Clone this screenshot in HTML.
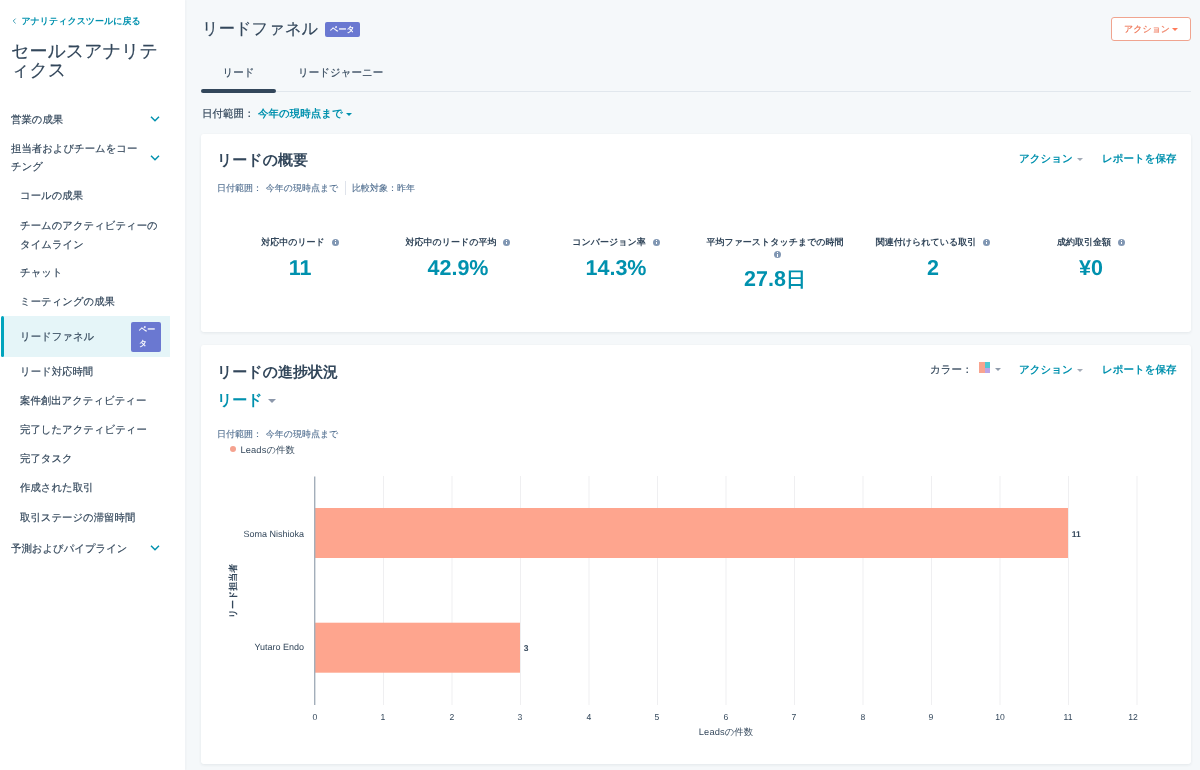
<!DOCTYPE html>
<html lang="ja">
<head>
<meta charset="utf-8">
<title>セールスアナリティクス</title>
<style>
*{box-sizing:border-box;margin:0;padding:0}
html,body{width:1200px;height:770px;overflow:hidden}
body{position:relative;background:#f5f8fa;font-family:"Liberation Sans",sans-serif;color:#33475b;font-size:10.5px;line-height:1;text-rendering:geometricPrecision;-webkit-text-stroke:.17px}
.a{position:absolute;white-space:nowrap}
.t{color:#0091ae}
.b{font-weight:bold}
.b,.kl,.kv,[style*="font-weight:bold"]{-webkit-text-stroke:0}
#w{position:absolute;left:0;top:0;width:1200px;height:770px;will-change:transform}
#side{position:absolute;left:0;top:0;width:185px;height:770px;background:#fff;box-shadow:1px 0 2px rgba(45,62,80,.04)}
.nav{position:absolute;left:11px;margin-top:2px;font-size:10.4px;line-height:18px;white-space:nowrap;color:#33475b}
.sub{left:20px}
.card{position:absolute;left:201px;width:990px;background:#fff;border-radius:3px;box-shadow:0 1px 3px rgba(45,62,80,.09)}
.kl{position:absolute;top:236px;width:160px;text-align:center;font-size:9px;font-weight:bold;line-height:12px;white-space:nowrap;color:#33475b}
.kv{position:absolute;top:255px;width:160px;text-align:center;font-size:21.5px;font-weight:bold;line-height:26px;white-space:nowrap;color:#0091ae}
.i{display:inline-block;width:7px;height:7px;border-radius:50%;background:#8197b3;margin-left:7px;vertical-align:-0.5px;position:relative}
.i:before{content:"";position:absolute;left:3px;top:3.1px;width:1px;height:2.6px;background:#fff}
.i:after{content:"";position:absolute;left:3px;top:1.2px;width:1px;height:.9px;background:#fff}
.sm{-webkit-text-stroke:.12px;font-size:9px;color:#516f90}
.cx{position:absolute;-webkit-text-stroke:0;font-size:9px;color:#33475b;white-space:nowrap;line-height:10px}
.tick{top:711.5px;width:30px;text-align:center;font-size:8.6px}
</style>
</head>
<body>
<div id="w">
<div id="side">
  <svg class="a" style="left:12.2px;top:17.4px" width="6" height="8" viewBox="0 0 6 8"><path d="M3.6 1.6 1.2 4 3.6 6.4" fill="none" stroke="#2a93ad" stroke-width="0.9"/></svg>
  <div class="a t b" style="left:21.4px;top:16px;font-size:9px;line-height:11px">アナリティクスツールに戻る</div>
  <div class="a" style="left:11px;top:42px;font-size:18px;line-height:19px;color:#33475b">セールスアナリテ<br>ィクス</div>

  <div class="nav" style="top:110px">営業の成果</div>
  <div class="nav" style="top:139px">担当者およびチームをコー<br>チング</div>
  <div class="nav sub" style="top:186px">コールの成果</div>
  <div class="nav sub" style="top:215px;line-height:19px">チームのアクティビティーの<br>タイムライン</div>
  <div class="nav sub" style="top:263px">チャット</div>
  <div class="nav sub" style="top:292px">ミーティングの成果</div>
  <div class="a" style="left:2px;top:316px;width:168px;height:41px;background:#e5f5f8"></div><div class="a" style="left:1px;top:316px;width:3px;height:41px;background:#00a4bd;border-radius:1.5px"></div>
  <div class="nav sub" style="top:327px">リードファネル</div>
  <div class="a" style="left:131px;top:321.5px;width:30px;height:30.5px;background:#6a78d1;border-radius:2px;color:#fff;font-size:8px;font-weight:bold;line-height:14px;padding:1px 0 0 8px">ベー<br>タ</div>
  <div class="nav sub" style="top:362px">リード対応時間</div>
  <div class="nav sub" style="top:391px">案件創出アクティビティー</div>
  <div class="nav sub" style="top:420px">完了したアクティビティー</div>
  <div class="nav sub" style="top:449px">完了タスク</div>
  <div class="nav sub" style="top:478px">作成された取引</div>
  <div class="nav sub" style="top:508px">取引ステージの滞留時間</div>
  <div class="nav" style="top:539px">予測およびパイプライン</div>

  <svg class="a" style="left:150px;top:115px" width="10" height="8" viewBox="0 0 10 8"><path d="M1 1.8 5 5.8 9 1.8" fill="none" stroke="#0091ae" stroke-width="1.5"/></svg>
  <svg class="a" style="left:150px;top:153.5px" width="10" height="8" viewBox="0 0 10 8"><path d="M1 1.8 5 5.8 9 1.8" fill="none" stroke="#0091ae" stroke-width="1.5"/></svg>
  <svg class="a" style="left:150px;top:544px" width="10" height="8" viewBox="0 0 10 8"><path d="M1 1.8 5 5.8 9 1.8" fill="none" stroke="#0091ae" stroke-width="1.5"/></svg>
</div>

<!-- header -->
<div class="a" style="left:202px;top:19.1px;font-size:16.3px;line-height:20px;color:#33475b">リードファネル</div>
<div class="a" style="left:325px;top:22px;width:35px;height:15px;background:#6a78d1;border-radius:2px;color:#fff;font-size:8px;font-weight:bold;line-height:15px;text-align:center">ベータ</div>
<div class="a" style="left:1111px;top:17px;width:80px;height:24px;background:#fff;border:1px solid #f0a48f;border-radius:3px;color:#ee7a5c;font-size:9px;line-height:22px;padding-left:12px">アクション<span style="display:inline-block;margin-left:2px;border:3px solid transparent;border-top:3.5px solid #ff7a59;border-bottom:0;vertical-align:1px"></span></div>

<!-- tabs -->
<div class="a" style="left:201px;top:91px;width:990px;height:1px;background:#e1e7ed"></div>
<div class="a" style="left:201.4px;top:89.4px;width:74.6px;height:4px;background:#33475b;border-radius:2px"></div>
<div class="a" style="left:201px;top:67px;width:75px;text-align:center;font-size:10.5px;line-height:12px">リード</div>
<div class="a" style="left:298px;top:67px;font-size:10.5px;line-height:12px">リードジャーニー</div>

<div class="a" style="left:202px;top:107.6px;font-size:10.5px;line-height:12px">日付範囲：</div>
<div class="a t b" style="left:258px;top:107.6px;font-size:10.5px;line-height:12px">今年の現時点まで<span style="display:inline-block;margin-left:3px;border:3px solid transparent;border-top:3.5px solid #0091ae;border-bottom:0;vertical-align:1px"></span></div>

<!-- card 1 -->
<div class="card" style="top:134px;height:198px"></div>
<div class="a" style="left:217px;top:152px;font-size:15px;font-weight:bold;line-height:18px;color:#33475b">リードの概要</div>
<div class="a t b" style="left:1019px;top:152.6px;font-size:10.5px;line-height:12px">アクション<span style="display:inline-block;margin-left:4px;border:3px solid transparent;border-top:3.5px solid #a3abb8;border-bottom:0;vertical-align:1px"></span></div>
<div class="a t b" style="left:1102px;top:152.6px;font-size:10.5px;line-height:12px">レポートを保存</div>
<div class="a sm" style="left:217px;top:183px;line-height:10px">日付範囲：</div><div class="a sm" style="left:265.7px;top:183px;line-height:10px">今年の現時点まで</div>
<div class="a" style="left:345px;top:181px;width:1px;height:14px;background:#dfe3eb"></div>
<div class="a sm" style="left:352px;top:183px;line-height:10px">比較対象：昨年</div>

<div class="kl" style="left:220px">対応中のリード<span class="i"></span></div>
<div class="kv" style="left:220px">11</div>
<div class="kl" style="left:378px">対応中のリードの平均<span class="i"></span></div>
<div class="kv" style="left:378px">42.9%</div>
<div class="kl" style="left:536px">コンバージョン率<span class="i"></span></div>
<div class="kv" style="left:536px">14.3%</div>
<div class="kl" style="left:695px">平均ファーストタッチまでの時間<br><span class="i" style="margin-left:5px;top:.8px"></span></div>
<div class="kv" style="left:695px;top:266px">27.8<span style="font-size:20px">日</span></div>
<div class="kl" style="left:853px">関連付けられている取引<span class="i"></span></div>
<div class="kv" style="left:853px">2</div>
<div class="kl" style="left:1011px">成約取引金額<span class="i"></span></div>
<div class="kv" style="left:1011px">¥0</div>

<!-- card 2 -->
<div class="card" style="top:345px;height:419px"></div>
<div class="a" style="left:217px;top:363.8px;font-size:15px;font-weight:bold;line-height:18px;color:#33475b">リードの進捗状況</div>
<div class="a t" style="left:217px;top:391.75px;font-size:15px;font-weight:bold;line-height:18px">リード<span style="display:inline-block;margin-left:5px;border:4px solid transparent;border-top:4.5px solid #8c98ab;border-bottom:0;vertical-align:1.5px"></span></div>
<div class="a" style="left:930px;top:363.6px;font-size:10.5px;line-height:12px">カラー：</div>
<div class="a" style="left:979px;top:361.5px;width:11px;height:11.5px;background:#f8a48f"></div>
<div class="a" style="left:984.5px;top:361.5px;width:5.5px;height:6px;background:#4fc8d3"></div>
<div class="a" style="left:984.5px;top:367.5px;width:5.5px;height:5.5px;background:#bba5e6"></div>
<div class="a" style="left:994.7px;top:367.6px;border:3px solid transparent;border-top:3.5px solid #8f9bab;border-bottom:0"></div>
<div class="a t b" style="left:1019px;top:363.6px;font-size:10.5px;line-height:12px">アクション<span style="display:inline-block;margin-left:4px;border:3px solid transparent;border-top:3.5px solid #a3abb8;border-bottom:0;vertical-align:1px"></span></div>
<div class="a t b" style="left:1102px;top:363.6px;font-size:10.5px;line-height:12px">レポートを保存</div>
<div class="a sm" style="left:217px;top:429px;line-height:10px">日付範囲：</div><div class="a sm" style="left:265.7px;top:429px;line-height:10px">今年の現時点まで</div>
<div class="a" style="left:230px;top:446px;width:6px;height:6px;border-radius:50%;background:#f5a28f"></div>
<div class="cx" style="left:240.5px;top:444.5px;font-size:9.3px;letter-spacing:.12px">Leadsの件数</div>

<!-- chart -->
<svg class="a" style="left:201px;top:470px" width="989" height="240" viewBox="201 470 989 240">
  <g stroke="#efeff1" stroke-width="1">
    <path d="M383.5 476V705M452 476V705M520.5 476V705M589 476V705M657.5 476V705M726 476V705M794.5 476V705M863 476V705M931.5 476V705M1000 476V705M1068.5 476V705M1137 476V705"/>
  </g>
  <rect x="315" y="508" width="753" height="50" fill="#fea58e"/>
  <rect x="315" y="622.7" width="205" height="50" fill="#fea58e"/>
  <path d="M314.7 476.5V705" stroke="#a3aeba" stroke-width="1.4"/>
</svg>
<div class="cx" style="left:204px;top:528.5px;width:100px;text-align:right">Soma Nishioka</div>
<div class="cx" style="left:204px;top:642.3px;width:100px;text-align:right">Yutaro Endo</div>
<div class="cx b" style="left:1071.7px;top:528.6px;font-size:8.5px">11</div>
<div class="cx b" style="left:523.8px;top:643px;font-size:8.5px">3</div>
<div class="cx b" style="left:232.5px;top:590.5px;font-size:9px;transform:translate(-50%,-50%) rotate(-90deg)">リード担当者</div>

<div class="cx tick" style="left:300px">0</div>
<div class="cx tick" style="left:368px">1</div>
<div class="cx tick" style="left:437px">2</div>
<div class="cx tick" style="left:505px">3</div>
<div class="cx tick" style="left:574px">4</div>
<div class="cx tick" style="left:642px">5</div>
<div class="cx tick" style="left:711px">6</div>
<div class="cx tick" style="left:779px">7</div>
<div class="cx tick" style="left:848px">8</div>
<div class="cx tick" style="left:916px">9</div>
<div class="cx tick" style="left:985px">10</div>
<div class="cx tick" style="left:1053px">11</div>
<div class="cx tick" style="left:1118px">12</div>
<div class="cx" style="left:676px;top:726.5px;width:100px;text-align:center;font-size:9.3px;letter-spacing:.12px">Leadsの件数</div>
</div>
</body>
</html>
